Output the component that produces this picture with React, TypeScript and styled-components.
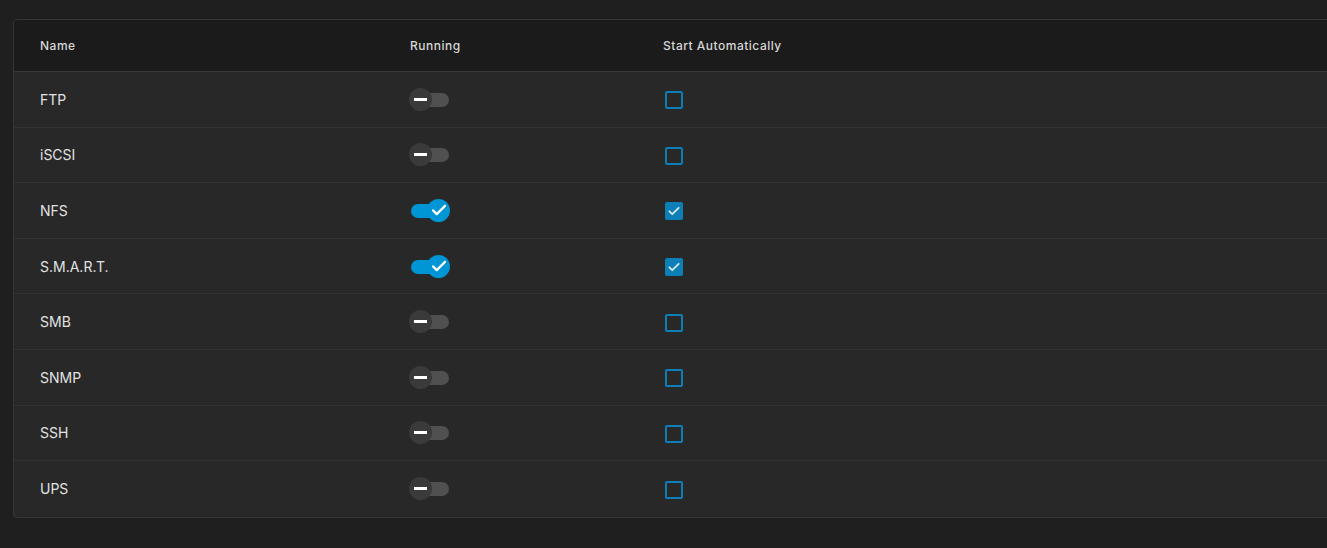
import * as React from 'react';
import styled, {createGlobalStyle} from 'styled-components';

const GlobalStyle = createGlobalStyle`
  html, body {
    margin: 0;
    padding: 0;
    background: #1f1f1f;
    overflow: hidden;
  }
  body {
    font-family: Inter, "Liberation Sans", sans-serif;
  }
`;

const Page = styled.div`
  padding: 19px 0 0 13px;
  width: 1327px;
  height: 548px;
  box-sizing: border-box;
`;

const Card = styled.div`
  width: 1340px;
  border: 1px solid #363636;
  border-radius: 4px;
  background: #282828;
  overflow: hidden;
`;

const Grid = styled.div`
  display: grid;
  grid-template-columns: 370px 253px 1fr;
  padding-left: 26px;
  align-items: center;
  box-sizing: border-box;
`;

const HeaderRow = styled(Grid)`
  height: 52px;
  background: #1b1b1b;
  border-bottom: 1px solid #383838;
`;

const HeaderCell = styled.div`
  font-size: 12px;
  font-weight: 500;
  color: #d6d6d6;
  letter-spacing: 0.5px;
`;

const Row = styled(Grid)<{ $last?: boolean }>`
  height: 55.6px;
  border-bottom: ${p => (p.$last ? 'none' : '1px solid #333333')};
`;

const NameCell = styled.div`
  font-size: 14px;
  color: #e2e2e2;
`;

const Toggle = styled.div<{ $on: boolean }>`
  position: relative;
  width: 40px;
  height: 24px;
  display: flex;
  align-items: center;
  margin-top: 1px;
`;

const Track = styled.div<{ $on: boolean }>`
  margin-left: 1px;
  width: 38px;
  height: 14px;
  border-radius: 7px;
  background: ${p => (p.$on ? '#0095d5' : '#505050')};
`;

const Thumb = styled.div<{ $on: boolean }>`
  position: absolute;
  top: 0;
  ${p => (p.$on ? 'right: 0;' : 'left: -1px;')}
  width: 23px;
  height: 23px;
  border-radius: 50%;
  background: ${p => (p.$on ? '#0095d5' : '#3a3a3a')};
  display: flex;
  align-items: center;
  justify-content: center;
`;

const Dash = styled.div`
  width: 13px;
  height: 3px;
  background: #ffffff;
`;

const Check = styled.div<{ $on: boolean }>`
  width: 18px;
  height: 18px;
  margin: 2px 0 0 2px;
  box-sizing: border-box;
  border-radius: 2px;
  border: 2px solid #0c7fb6;
  background: ${p => (p.$on ? '#0c7fb6' : 'transparent')};
  display: flex;
  align-items: center;
  justify-content: center;
`;

const services = [
  {name: 'FTP', on: false},
  {name: 'iSCSI', on: false},
  {name: 'NFS', on: true},
  {name: 'S.M.A.R.T.', on: true},
  {name: 'SMB', on: false},
  {name: 'SNMP', on: false},
  {name: 'SSH', on: false},
  {name: 'UPS', on: false},
];

function SlideToggle({on}: { on: boolean }) {
  return (
    <Toggle $on={on}>
      <Track $on={on}/>
      <Thumb $on={on}>
        {on ? (
          <svg width="18" height="18" viewBox="0 0 24 24">
            <path d="M4 12.5l5 5L20 6.5" fill="none" stroke="#fff" strokeWidth="3" strokeLinecap="round" strokeLinejoin="round"/>
          </svg>
        ) : <Dash/>}
      </Thumb>
    </Toggle>
  );
}

function Checkbox({on}: { on: boolean }) {
  return (
    <Check $on={on}>
      {on && (
        <svg width="14" height="14" viewBox="0 0 24 24">
          <path d="M4 12.5l5 5L20 6.5" fill="none" stroke="#d8e6ee" strokeWidth="3" strokeLinecap="round" strokeLinejoin="round"/>
        </svg>
      )}
    </Check>
  );
}

export default function App() {
  return (
    <Page>
      <GlobalStyle/>
      <Card>
        <HeaderRow>
          <HeaderCell>Name</HeaderCell>
          <HeaderCell>Running</HeaderCell>
          <HeaderCell>Start Automatically</HeaderCell>
        </HeaderRow>
        {services.map((s, i) => (
          <Row key={s.name} $last={i === services.length - 1}>
            <NameCell>{s.name}</NameCell>
            <SlideToggle on={s.on}/>
            <Checkbox on={s.on}/>
          </Row>
        ))}
      </Card>
    </Page>
  );
}
